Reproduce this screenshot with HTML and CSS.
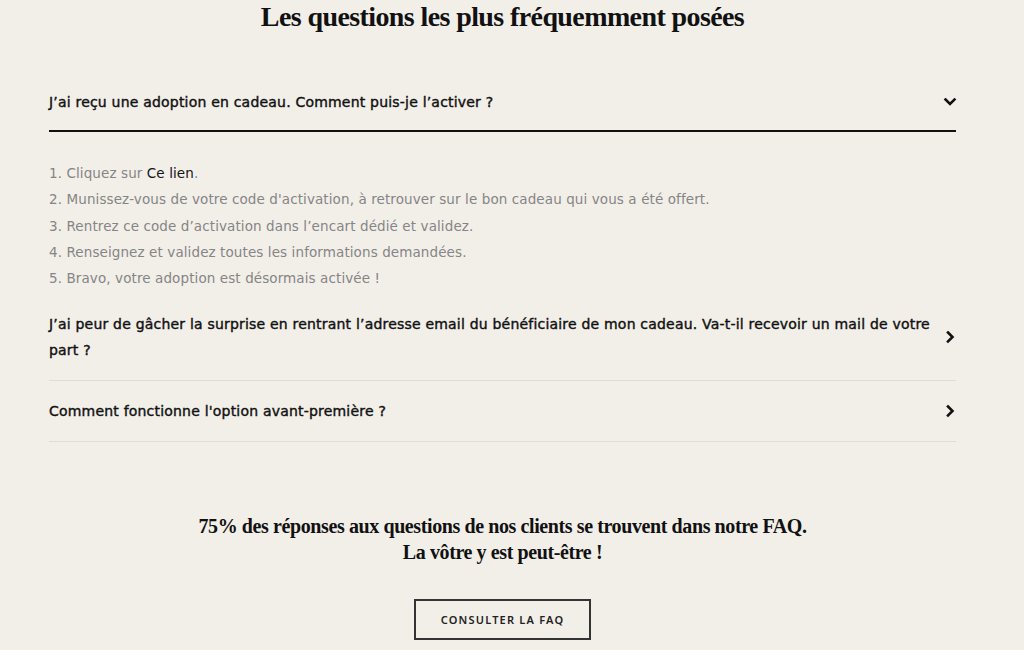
FILE: index.html
```html
<!DOCTYPE html>
<html lang="fr">
<head>
<meta charset="utf-8">
<title>FAQ</title>
<link rel="stylesheet" href="styles.css">
</head>
<body>
<div class="page">
  <h1 class="title">Les questions les plus fréquemment posées</h1>
  <div class="faq">
    <div class="item open">
      <div class="q">
        <span class="q-text">J’ai reçu une adoption en cadeau. Comment puis-je l’activer ?</span>
        <svg class="chev" width="14" height="14" viewBox="0 0 14 14"><polyline points="2.5,4.5 7,9 11.5,4.5" fill="none" stroke="#111" stroke-width="2.6" stroke-linecap="square"/></svg>
      </div>
      <ol class="answer">
        <li>1. Cliquez sur <a class="link">Ce lien</a>.</li>
        <li>2. Munissez-vous de votre code d'activation, à retrouver sur le bon cadeau qui vous a été offert.</li>
        <li>3. Rentrez ce code d’activation dans l’encart dédié et validez.</li>
        <li>4. Renseignez et validez toutes les informations demandées.</li>
        <li>5. Bravo, votre adoption est désormais activée !</li>
      </ol>
    </div>
    <div class="item">
      <div class="q">
        <span class="q-text">J’ai peur de gâcher la surprise en rentrant l’adresse email du bénéficiaire de mon cadeau. Va-t-il recevoir un mail de votre part ?</span>
        <svg class="chev" width="14" height="14" viewBox="0 0 14 14"><polyline points="5,2.5 9.5,7 5,11.5" fill="none" stroke="#111" stroke-width="2.6" stroke-linecap="square"/></svg>
      </div>
    </div>
    <div class="item">
      <div class="q">
        <span class="q-text">Comment fonctionne l'option avant-première ?</span>
        <svg class="chev" width="14" height="14" viewBox="0 0 14 14"><polyline points="5,2.5 9.5,7 5,11.5" fill="none" stroke="#111" stroke-width="2.6" stroke-linecap="square"/></svg>
      </div>
    </div>
  </div>
  <p class="cta-text">75% des réponses aux questions de nos clients se trouvent dans notre FAQ.<br>La vôtre y est peut-être !</p>
  <div class="cta">
    <a class="btn">CONSULTER LA FAQ</a>
  </div>
</div>
</body>
</html>
```

FILE: styles.css
```css
html, body {
  margin: 0;
  padding: 0;
  background: #f2efe9;
}
body {
  width: 1005px;
  height: 650px;
  overflow: hidden;
  color: #141414;
}
.page {
  width: 907px;
  margin: 0 auto;
}
.title {
  margin: 0;
  font-family: "Liberation Serif", serif;
  font-weight: bold;
  font-size: 28px;
  line-height: 34px;
  letter-spacing: -0.6px;
  text-align: center;
  color: #111;
}
.faq {
  margin-top: 38px;
}
.q {
  display: flex;
  align-items: center;
  justify-content: space-between;
  gap: 10px;
  padding: 17px 0 17px;
  border-bottom: 1px solid #e0ddd7;
  font-family: "DejaVu Sans", sans-serif;
  font-weight: normal;
  font-size: 14px;
  letter-spacing: 0.2px;
  line-height: 26px;
  color: #111;
  -webkit-text-stroke: 0.4px #111;
}
.open .q {
  padding-bottom: 15px;
  border-bottom: 2px solid #111;
}
.q-text {
  flex: 1;
}
.chev {
  flex: none;
  margin-right: -1px;
}
.answer {
  list-style: none;
  margin: 0;
  padding: 28px 0 3px;
  font-family: "DejaVu Sans", sans-serif;
  font-weight: normal;
  font-size: 13.5px;
  letter-spacing: 0.1px;
  line-height: 26.25px;
  color: #858585;
}
.link {
  color: #141414;
}
.cta-text {
  margin: 71px 0 0;
  font-family: "Liberation Serif", serif;
  font-weight: bold;
  font-size: 20px;
  line-height: 26px;
  letter-spacing: -0.4px;
  text-align: center;
  color: #111;
}
.cta {
  display: flex;
  justify-content: center;
  margin-top: 34px;
}
.btn {
  display: flex;
  align-items: center;
  justify-content: center;
  width: 173px;
  height: 37px;
  border: 2px solid #333;
  font-family: "Noto Sans", sans-serif;
  font-weight: 600;
  font-size: 11px;
  letter-spacing: 1.2px;
  color: #222;
}
```
